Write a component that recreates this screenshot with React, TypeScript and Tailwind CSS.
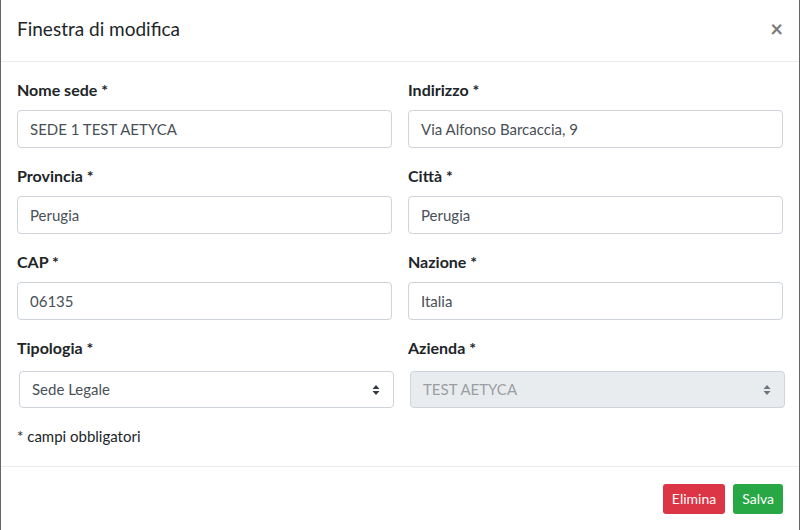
import React from 'react';

const font = { fontFamily: 'Lato, "Liberation Sans", sans-serif' };

function Field({ label, value }: { label: string; value: string }) {
  return (
    <div className="mb-4">
      <label className="block mb-2 text-[16px] leading-6 font-bold text-[#212529]">{label}</label>
      <div className="h-[38px] border border-[#ced4da] rounded-[4px] px-3 flex items-center text-[15px] text-[#495057] bg-white">
        {value}
      </div>
    </div>
  );
}

function SelectField({ label, value, disabled }: { label: string; value: string; disabled?: boolean }) {
  return (
    <div className="mb-4">
      <label className="block mb-2 text-[16px] leading-6 font-bold text-[#212529]">{label}</label>
      <div className="pt-[3px] pl-[2px] mr-[-2px]">
        <div
          className={
            'h-[37px] border border-[#ced4da] rounded-[4px] px-3 flex items-center justify-between text-[15px] ' +
            (disabled ? 'bg-[#e9ecef] text-[#9a9ea3]' : 'bg-white text-[#495057]')
          }
        >
          <span>{value}</span>
          <svg width="8" height="12" viewBox="0 0 8 12" className="mr-[1px]">
            <path d="M4 1 L7.5 5 H0.5 Z" fill={disabled ? '#6c757d' : '#343a40'} />
            <path d="M4 11 L7.5 7 H0.5 Z" fill={disabled ? '#6c757d' : '#343a40'} />
          </svg>
        </div>
      </div>
    </div>
  );
}

export default function App() {
  return (
    <div className="w-[800px] h-[530px] bg-white border-x border-[#666] flex flex-col overflow-hidden" style={font}>
      {/* Header */}
      <div className="h-[62px] border-b border-[#e9ecef] px-4 pb-[3px] flex items-center justify-between">
        <h4 className="text-[19px] text-[#212529] leading-[30px]">Finestra di modifica</h4>
        <span className="text-[22px] font-bold text-[#7a7a7a] leading-none">×</span>
      </div>

      {/* Body */}
      <div className="px-4 pt-4 pb-[18px] border-b border-[#e9ecef]">
        <div className="grid grid-cols-2 gap-x-4">
          <Field label="Nome sede *" value="SEDE 1 TEST AETYCA" />
          <Field label="Indirizzo *" value="Via Alfonso Barcaccia, 9" />
          <Field label="Provincia *" value="Perugia" />
          <Field label="Città *" value="Perugia" />
          <Field label="CAP *" value="06135" />
          <Field label="Nazione *" value="Italia" />
          <SelectField label="Tipologia *" value="Sede Legale" />
          <SelectField label="Azienda *" value="TEST AETYCA" disabled />
        </div>
        <p className="text-[15px] leading-6 text-[#212529]">* campi obbligatori</p>
      </div>

      {/* Footer */}
      <div className="flex-1 flex items-center justify-end gap-2 px-4">
        <button className="h-[30px] px-[9px] rounded-[3px] bg-[#dc3545] text-white text-[14px]">Elimina</button>
        <button className="h-[30px] px-[9px] rounded-[3px] bg-[#28a745] text-white text-[14px]">Salva</button>
      </div>
    </div>
  );
}
